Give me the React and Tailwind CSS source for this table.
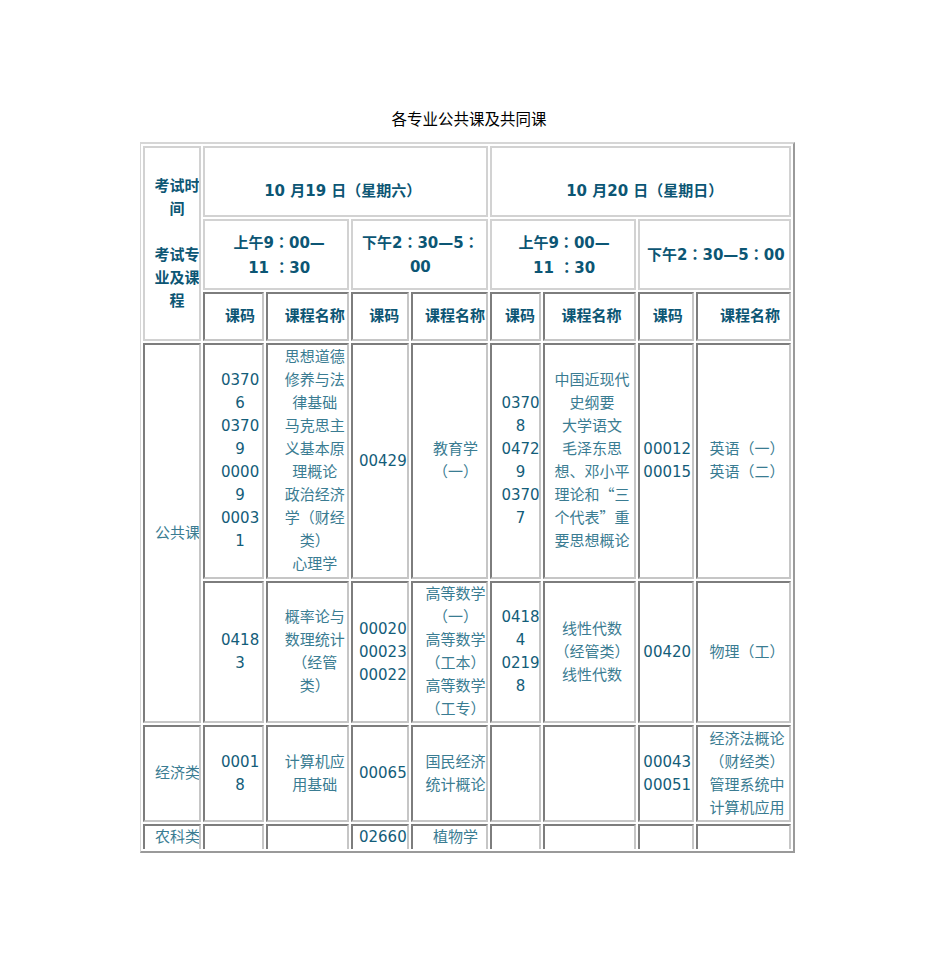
import React from "react";

const HB = "border-2 border-[#d2d2d2]";
const BB = "border-2 border-t-[#7d7d7d] border-l-[#7d7d7d] border-r-[#c6c6c6] border-b-[#c6c6c6]";

const CJK_FONT = { fontFamily: '"Noto Sans CJK SC", "DejaVu Sans", sans-serif' };
const JP_FONT = { fontFamily: '"Noto Sans CJK JP", sans-serif' };

function renderLine(l) {
  if (l === "") return "\u00a0";
  if (!l.includes("：")) return l;
  const parts = l.split("：");
  const out = [];
  parts.forEach((p, i) => {
    out.push(<span key={"p" + i}>{p}</span>);
    if (i < parts.length - 1)
      out.push(
        <span key={"c" + i} style={JP_FONT}>
          ：
        </span>
      );
  });
  return out;
}

function Lines({ lines, shift = "pl-[10px]", bold = false, lh = "leading-[23px]" }) {
  return (
    <div className={`flex flex-col items-center justify-center ${shift} ${lh} ${bold ? "font-bold text-[#0c5674]" : ""}`}>
      {lines.map((l, i) => {
        const cjkOnly = !bold && /[\u4e00-\u9fff]/.test(l) && !/[0-9]/.test(l);
        return (
          <div
            key={i}
            className={`whitespace-nowrap min-h-[23px] ${bold ? "" : cjkOnly ? "text-[#3a7c92] leading-[19px] pb-[4px]" : "text-[#135d79]"}`}
            style={cjkOnly ? CJK_FONT : undefined}
          >
            {renderLine(l)}
          </div>
        );
      })}
    </div>
  );
}

function Td({ lines, shift, bold, border = BB, h, rowSpan, colSpan, lh, extra = "" }) {
  return (
    <td
      rowSpan={rowSpan}
      colSpan={colSpan}
      className={`${border} ${h || ""} p-0 align-middle overflow-hidden ${extra}`}
    >
      {lines && <Lines lines={lines} shift={shift} bold={bold} lh={lh} />}
    </td>
  );
}

export default function App() {
  return (
    <div
      className="w-[950px] min-h-[964px] bg-white pt-[107px]"
      style={{ fontFamily: '"DejaVu Sans", "Noto Sans CJK SC", sans-serif' }}
    >
      <div className="ml-[140px] w-[656px]">
        <div
          className="text-center text-[15.5px] leading-[22px] text-black mb-[13px] pl-[2px]"
          style={CJK_FONT}
        >
          各专业公共课及共同课
        </div>
        <table className="table-fixed border-separate border-spacing-[2px] border-2 border-l-[1px] border-t-[#d6d6d6] border-l-[#d6d6d6] border-r-[#9a9a9a] border-b-[#9a9a9a] text-[15px] w-[655px]">
          <colgroup>
            <col className="w-[58px]" />
            <col className="w-[61px]" />
            <col className="w-[83px]" />
            <col className="w-[58px]" />
            <col className="w-[77px]" />
            <col className="w-[50px]" />
            <col className="w-[93px]" />
            <col className="w-[56px]" />
            <col className="w-[95px]" />
          </colgroup>
          <tbody>
            <tr>
              <Td
                rowSpan={3}
                border={HB}
                bold
                shift="pl-[10px]"
                lines={["考试时", "间", "", "考试专", "业及课", "程"]}
              />
              <Td colSpan={4} border={HB} h="h-[71px]" bold shift="pr-[6px] pt-[20px]" lines={["10  月19  日（星期六）"]} />
              <Td colSpan={4} border={HB} h="h-[71px]" bold shift="pl-[8px] pt-[20px]" lines={["10  月20  日（星期日）"]} />
            </tr>
            <tr>
              <Td colSpan={2} border={HB} h="h-[71px]" bold lh="leading-[24px]" shift="pl-[6px]" lines={["上午9：00—", "11 ：30"]} />
              <Td colSpan={2} border={HB} h="h-[71px]" bold lh="leading-[24px]" shift="pl-[1px]" lines={["下午2：30—5：", "00"]} />
              <Td colSpan={2} border={HB} h="h-[71px]" bold lh="leading-[24px]" shift="pl-[2px]" lines={["上午9：00—", "11 ：30"]} />
              <Td colSpan={2} border={HB} h="h-[71px]" bold lh="leading-[24px]" shift="pl-[3px]" lines={["下午2：30—5：00"]} />
            </tr>
            <tr>
              <Td h="h-[49px]" bold shift="pl-[13px]" lines={["课码"]} />
              <Td h="h-[49px]" bold shift="pl-[14px]" lines={["课程名称"]} />
              <Td h="h-[49px]" bold shift="pl-[8px]" lines={["课码"]} />
              <Td h="h-[49px]" bold shift="pl-[10px]" lines={["课程名称"]} />
              <Td h="h-[49px]" bold shift="pl-[9px]" lines={["课码"]} />
              <Td h="h-[49px]" bold shift="pl-[5px]" lines={["课程名称"]} />
              <Td h="h-[49px]" bold shift="pl-[4px]" lines={["课码"]} />
              <Td h="h-[49px]" bold shift="pl-[13px]" lines={["课程名称"]} />
            </tr>
            <tr>
              <Td rowSpan={2} shift="pl-[11px]" lines={["公共课"]} />
              <Td h="h-[236px]" shift="pl-[13px]" lines={["0370", "6", "0370", "9", "0000", "9", "0003", "1"]} />
              <Td h="h-[236px]" shift="pl-[14px]" lines={["思想道德", "修养与法", "律基础", "马克思主", "义基本原", "理概论", "政治经济", "学（财经", "类）", "心理学"]} />
              <Td h="h-[236px]" shift="pl-[5px]" lines={["00429"]} />
              <Td h="h-[236px]" shift="pl-[11px]" lines={["教育学", "（一）"]} />
              <Td h="h-[236px]" shift="pl-[10px]" lines={["0370", "8", "0472", "9", "0370", "7"]} />
              <Td h="h-[236px]" shift="pl-[6px]" lines={["中国近现代", "史纲要", "大学语文", "毛泽东思", "想、邓小平", "理论和“三", "个代表”重", "要思想概论"]} />
              <Td h="h-[236px]" shift="pl-[3px]" lines={["00012", "00015"]} />
              <Td h="h-[236px]" shift="pl-[7px]" lines={["英语（一）", "英语（二）"]} />
            </tr>
            <tr>
              <Td h="h-[142px]" shift="pl-[13px]" lines={["0418", "3"]} />
              <Td h="h-[142px]" shift="pl-[14px]" lines={["概率论与", "数理统计", "（经管", "类）"]} />
              <Td h="h-[142px]" shift="pl-[5px]" lines={["00020", "00023", "00022"]} />
              <Td h="h-[142px]" shift="pl-[11px]" lines={["高等数学", "（一）", "高等数学", "（工本）", "高等数学", "（工专）"]} />
              <Td h="h-[142px]" shift="pl-[10px]" lines={["0418", "4", "0219", "8"]} />
              <Td h="h-[142px]" shift="pl-[6px]" lines={["线性代数", "（经管类）", "线性代数"]} />
              <Td h="h-[142px]" shift="pl-[3px]" lines={["00420"]} />
              <Td h="h-[142px]" shift="pl-[7px]" lines={["物理（工）"]} />
            </tr>
            <tr>
              <Td h="h-[97px]" shift="pl-[11px]" lines={["经济类"]} />
              <Td h="h-[97px]" shift="pl-[13px]" lines={["0001", "8"]} />
              <Td h="h-[97px]" shift="pl-[14px]" lines={["计算机应", "用基础"]} />
              <Td h="h-[97px]" shift="pl-[5px]" lines={["00065"]} />
              <Td h="h-[97px]" shift="pl-[11px]" lines={["国民经济", "统计概论"]} />
              <Td h="h-[97px]" />
              <Td h="h-[97px]" />
              <Td h="h-[97px]" shift="pl-[3px]" lines={["00043", "00051"]} />
              <Td h="h-[97px]" shift="pl-[7px]" lines={["经济法概论", "（财经类）", "管理系统中", "计算机应用"]} />
            </tr>
            <tr>
              <Td h="h-[24px]" extra="border-b-0" shift="pl-[11px]" lines={["农科类"]} />
              <Td h="h-[24px]" extra="border-b-0" />
              <Td h="h-[24px]" extra="border-b-0" />
              <Td h="h-[24px]" extra="border-b-0" shift="pl-[5px]" lines={["02660"]} />
              <Td h="h-[24px]" extra="border-b-0" shift="pl-[11px]" lines={["植物学"]} />
              <Td h="h-[24px]" extra="border-b-0" />
              <Td h="h-[24px]" extra="border-b-0" />
              <Td h="h-[24px]" extra="border-b-0" />
              <Td h="h-[24px]" extra="border-b-0" />
            </tr>
          </tbody>
        </table>
      </div>
    </div>
  );
}
